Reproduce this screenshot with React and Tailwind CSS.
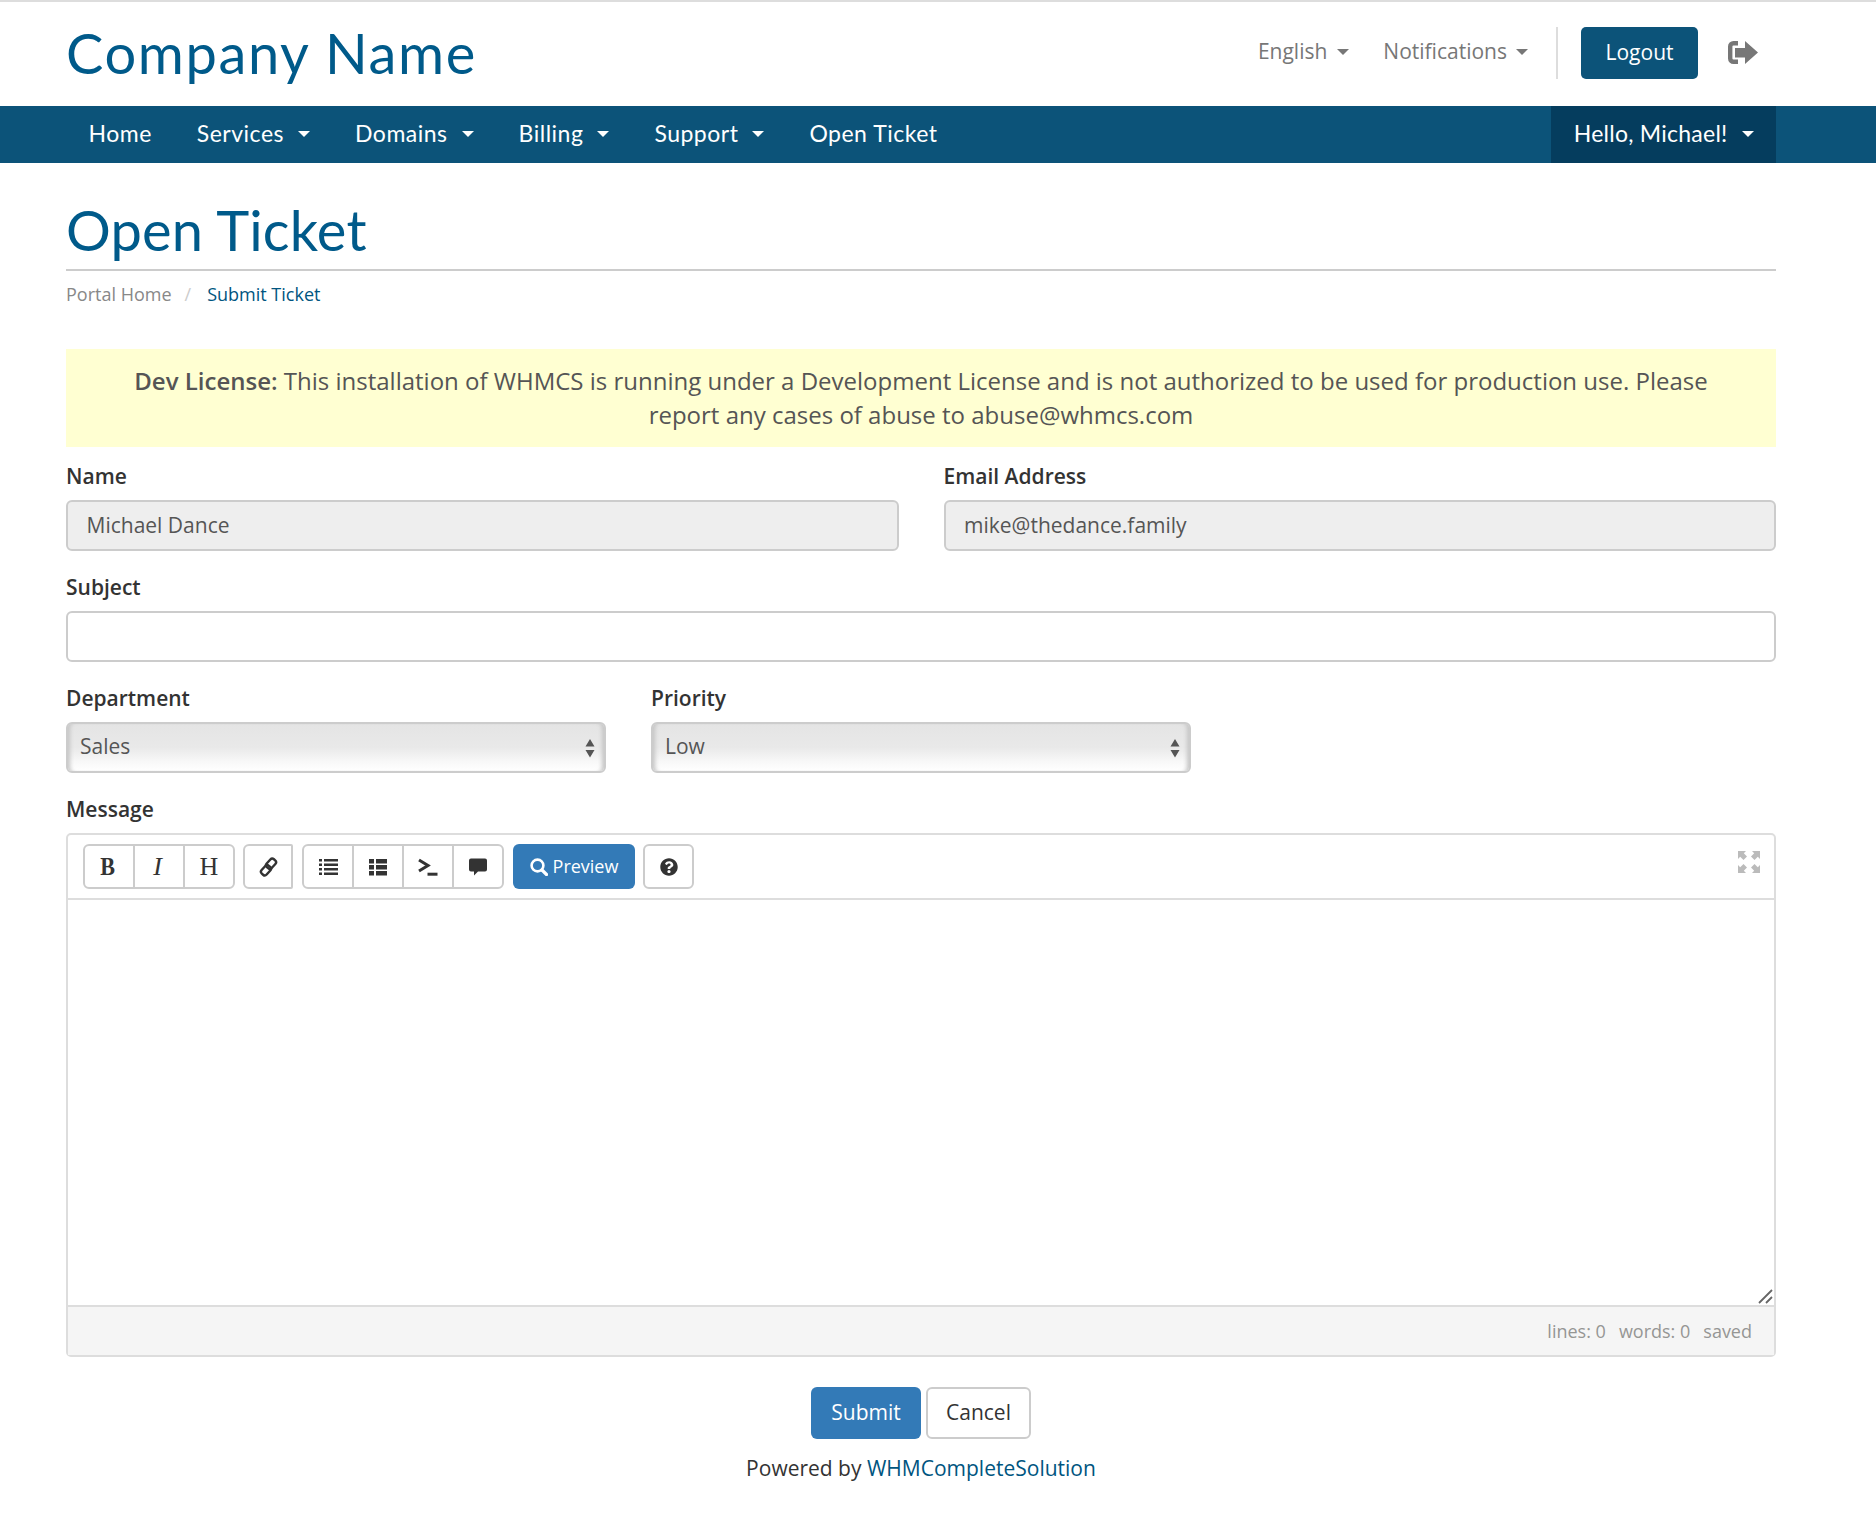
import React from "react";
import { FaQuestionCircle } from "react-icons/fa";

const Caret = ({ c = "border-t-white" }) => (
  <span className={`inline-block w-0 h-0 border-x-[6px] border-x-transparent border-t-[6px] ${c}`} />
);

const NavItem = ({ label, caret }) => (
  <a className="flex items-center h-full px-[22.5px] pb-[2px] gap-[14px] text-white">
    <span>{label}</span>
    {caret && <Caret />}
  </a>
);

const Label = ({ children }) => (
  <label className="block h-[30px] leading-[28px] mb-[8px] text-[21px] font-semibold text-[#333]">{children}</label>
);

const Input = ({ value, disabled }) => (
  <input
    readOnly
    value={value || ""}
    className={`block w-full h-[51px] px-[18.5px] pb-[2px] border-2 border-[#ccc] rounded-[6px] text-[21px] text-[#555] outline-none ${disabled ? "bg-[#eee]" : "bg-white"}`}
  />
);

const Select = ({ value }) => (
  <div className="relative w-[540px] h-[51px]">
    <select
      defaultValue={value}
      className="block w-full h-full pl-[12px] pb-[2px] appearance-none border-2 border-[#ccc] rounded-[6px] text-[21px] text-[#555] outline-none bg-[linear-gradient(180deg,#e4e4e4_0%,#e9e9e9_50%,#f8f8f8_80%,#ffffff_100%)] shadow-[inset_5px_0_4px_-3px_#c4c4c4,inset_-5px_0_4px_-3px_#c4c4c4]"
    >
      <option>{value}</option>
    </select>
    <svg className="absolute right-[11px] top-[16px] pointer-events-none" width="10" height="20" viewBox="0 0 10 20">
      <path d="M5 1 L9.5 8.5 H0.5 Z M0.5 12 H9.5 L5 19.5 Z" fill="#555" />
    </svg>
  </div>
);

const TB = ({ children, className = "" }) => (
  <button className={`flex items-center justify-center w-[52px] h-[45px] -ml-[2px] first:ml-0 border-2 border-[#ccc] first:rounded-l-[6px] last:rounded-r-[6px] bg-white text-[#333] ${className}`}>
    {children}
  </button>
);

const LinkIcon = () => (
  <svg width="19" height="20" viewBox="0 0 18 19" fill="none" stroke="#333" strokeWidth="2.3">
    <rect x="8.2" y="1.4" width="6.4" height="10" rx="2.4" transform="rotate(42 11.4 6.4)" />
    <rect x="3.4" y="7.6" width="6.4" height="10" rx="2.4" transform="rotate(42 6.6 12.6)" />
  </svg>
);

const ListA = () => (
  <svg width="19" height="18" viewBox="0 0 19 18" fill="#333">
    <path d="M0 1 H3 V3.5 H0 Z M5 1 H19 V3.5 H5 Z M0 5.5 H3 V8 H0 Z M5 5.5 H19 V8 H5 Z M0 10 H3 V12.5 H0 Z M5 10 H19 V12.5 H5 Z M0 14.5 H3 V17 H0 Z M5 14.5 H19 V17 H5 Z" />
  </svg>
);

const ListB = () => (
  <svg width="18" height="18" viewBox="0 0 18 18" fill="#333">
    <path d="M0 1 H5 V5.5 H0 Z M7 1 H18 V5.5 H7 Z M0 7 H5 V11.5 H0 Z M7 7 H18 V11.5 H7 Z M0 13 H5 V17.5 H0 Z M7 13 H18 V17.5 H7 Z" />
  </svg>
);

const Term = () => (
  <svg width="20" height="18" viewBox="0 0 20 18" fill="none" stroke="#333" strokeWidth="3">
    <path d="M1 2 L10 7.5 L1 13" />
    <path d="M9.5 16.2 H19.5" />
  </svg>
);

const Bubble = () => (
  <svg width="18" height="18" viewBox="0 0 18 18" fill="#333">
    <path d="M2 0.5 H16 A2 2 0 0 1 18 2.5 V11.5 A2 2 0 0 1 16 13.5 H9 L5 17.5 V13.5 H2 A2 2 0 0 1 0 11.5 V2.5 A2 2 0 0 1 2 0.5 Z" />
  </svg>
);

const SearchIcon = () => (
  <svg width="18" height="18" viewBox="0 0 18 18" fill="none" stroke="#fff">
    <circle cx="7.5" cy="7.5" r="5.9" strokeWidth="2.6" />
    <path d="M12 12 L16.5 16.5" strokeWidth="3.2" strokeLinecap="round" />
  </svg>
);

const LogoutIcon = () => (
  <svg className="ml-[30px] mb-[2px]" width="30" height="23" viewBox="0 0 30 23" fill="#777">
    <path d="M10 2.2 H5.5 A3.3 3.3 0 0 0 2.2 5.5 V17.5 A3.3 3.3 0 0 0 5.5 20.8 H10" fill="none" stroke="#777" strokeWidth="4.4" />
    <path d="M7 7 H17 V0 L30 11.5 L17 23 V16.5 H7 Z" />
  </svg>
);

export default function App() {
  return (
    <div className="w-full min-h-[1540px] bg-white font-['Open_Sans',sans-serif] text-[21px] text-[#333]">
      <header className="flex items-center h-[106px] pl-[66px] pr-[118px] border-t-2 border-[#ddd]">
        <div className="font-['Lato',sans-serif] text-[56px] leading-none tracking-[1.6px] text-[#005a8a] -mt-[2px]">Company Name</div>
        <div className="ml-auto flex items-center text-[21px] text-[#777] -mt-[2px]">
          <a className="flex items-center gap-[10px] mb-[3px]">English <Caret c="border-t-[#777]" /></a>
          <a className="flex items-center gap-[9px] ml-[34px] mb-[3px]">Notifications <Caret c="border-t-[#777]" /></a>
          <div className="w-[2px] h-[52px] bg-[#ddd] ml-[28px]" />
          <a className="flex items-center justify-center w-[117px] h-[52px] ml-[23px] rounded-[5px] bg-[#0c5379] text-white">Logout</a>
          <LogoutIcon />
        </div>
      </header>

      <nav className="flex h-[57px] pl-[66px] pr-[100px] bg-[#0c5379] font-['Lato',sans-serif] text-[23px] tracking-[0.5px] leading-none">
        <NavItem label="Home" />
        <NavItem label="Services" caret />
        <NavItem label="Domains" caret />
        <NavItem label="Billing" caret />
        <NavItem label="Support" caret />
        <NavItem label="Open Ticket" />
        <div className="ml-auto h-full bg-[#053d5e] tracking-[0.25px]">
          <NavItem label="Hello, Michael!" caret />
        </div>
      </nav>

      <main className="pl-[66px] pr-[100px]">
        <h1 className="flex items-center h-[108px] pt-[28px] border-b-2 border-[#ccc] font-['Lato',sans-serif] font-normal text-[56px] tracking-[0.2px] leading-none text-[#005a8a]">Open Ticket</h1>
        <div className="flex items-center h-[47px] text-[18px]">
          <a className="text-[#888]">Portal Home</a>
          <span className="text-[#ccc] ml-[13px] mr-[16px]">/</span>
          <a className="text-[#005580]">Submit Ticket</a>
        </div>
        <div className="mt-[31px] h-[98px] flex items-center justify-center text-center bg-[#ffffd2] text-[24px] leading-[34.3px] text-[#555]">
          <p>
            <b className="font-semibold">Dev License:</b> This installation of WHMCS is running under a Development License and is not authorized to be used for production use. Please<br />
            report any cases of abuse to abuse@whmcs.com
          </p>
        </div>

        <div className="grid grid-cols-2 gap-x-[45px] mt-[15px]">
          <div><Label>Name</Label><Input value="Michael Dance" disabled /></div>
          <div><Label>Email Address</Label><Input value="mike@thedance.family" disabled /></div>
        </div>

        <div className="mt-[22px]"><Label>Subject</Label><Input /></div>

        <div className="flex gap-[45px] mt-[22px]">
          <div><Label>Department</Label><Select value="Sales" /></div>
          <div><Label>Priority</Label><Select value="Low" /></div>
        </div>

        <div className="mt-[22px]">
          <Label>Message</Label>
          <div className="border-2 border-[#ddd] rounded-[5px]">
            <div className="flex items-start h-[65px] pt-[9px] pl-[15px] pr-[14px] border-b-2 border-[#ddd]">
              <div className="flex font-['Liberation_Serif',serif] text-[26px] leading-none">
                <TB className="font-bold pr-[3px]"><span className="inline-block scale-x-[0.85]">B</span></TB>
                <TB className="italic pr-[3px]">I</TB>
                <TB>H</TB>
              </div>
              <div className="flex ml-[8px]">
                <button className="flex items-center justify-center w-[50px] h-[45px] border-2 border-[#ccc] rounded-l-[6px] rounded-r-[2px] bg-white">
                  <LinkIcon />
                </button>
              </div>
              <div className="flex ml-[9px]">
                <TB><ListA /></TB>
                <TB><ListB /></TB>
                <TB><Term /></TB>
                <TB><Bubble /></TB>
              </div>
              <button className="flex items-center justify-center gap-[5px] w-[122px] h-[45px] ml-[9px] rounded-[6px] bg-[#337ab7] text-white text-[18px] font-medium">
                <SearchIcon /> Preview
              </button>
              <button className="flex items-center justify-center w-[51px] h-[45px] ml-[8px] border-2 border-[#ccc] rounded-[6px] bg-white text-[#333]">
                <FaQuestionCircle className="w-[18px] h-[18px]" />
              </button>
              <svg className="ml-auto mt-[7px]" width="22" height="22" viewBox="0 0 22 22" fill="#bbb">
                <path d="M0 0 H8 L5.8 2.2 L9 5.5 L5.5 9 L2.2 5.8 L0 8 Z M22 0 V8 L19.8 5.8 L16.5 9 L13 5.5 L16.2 2.2 L14 0 Z M0 22 V14 L2.2 16.2 L5.5 13 L9 16.5 L5.8 19.8 L8 22 Z M22 22 H14 L16.2 19.8 L13 16.5 L16.5 13 L19.8 16.2 L22 14 Z" />
              </svg>
            </div>
            <div className="relative">
              <textarea className="block w-full h-[405px] outline-none resize-none bg-white" />
              <svg className="absolute right-[1px] bottom-[1px] pointer-events-none" width="15" height="15" viewBox="0 0 15 15" stroke="#666" strokeWidth="1.8" fill="none">
                <path d="M1 14 L14 1 M8 14 L14 8" />
              </svg>
            </div>
            <div className="flex items-center justify-end gap-[13px] h-[50px] pr-[22px] bg-[#f5f5f5] border-t-2 border-[#ddd] text-[18px] text-[#959694]">
              <span>lines: 0</span>
              <span>words: 0</span>
              <span>saved</span>
            </div>
          </div>
        </div>

        <div className="flex justify-center gap-[5px] mt-[30px]">
          <button className="w-[110px] h-[52px] pb-[1px] rounded-[6px] bg-[#337ab7] text-white text-[21px]">Submit</button>
          <button className="w-[105px] h-[52px] pb-[1px] rounded-[6px] border-2 border-[#ccc] bg-white text-[21px] text-[#333]">Cancel</button>
        </div>
        <p className="mt-[14px] h-[30px] leading-[30px] text-center text-[21px]">Powered by <a className="text-[#005580]">WHMCompleteSolution</a></p>
      </main>
    </div>
  );
}
